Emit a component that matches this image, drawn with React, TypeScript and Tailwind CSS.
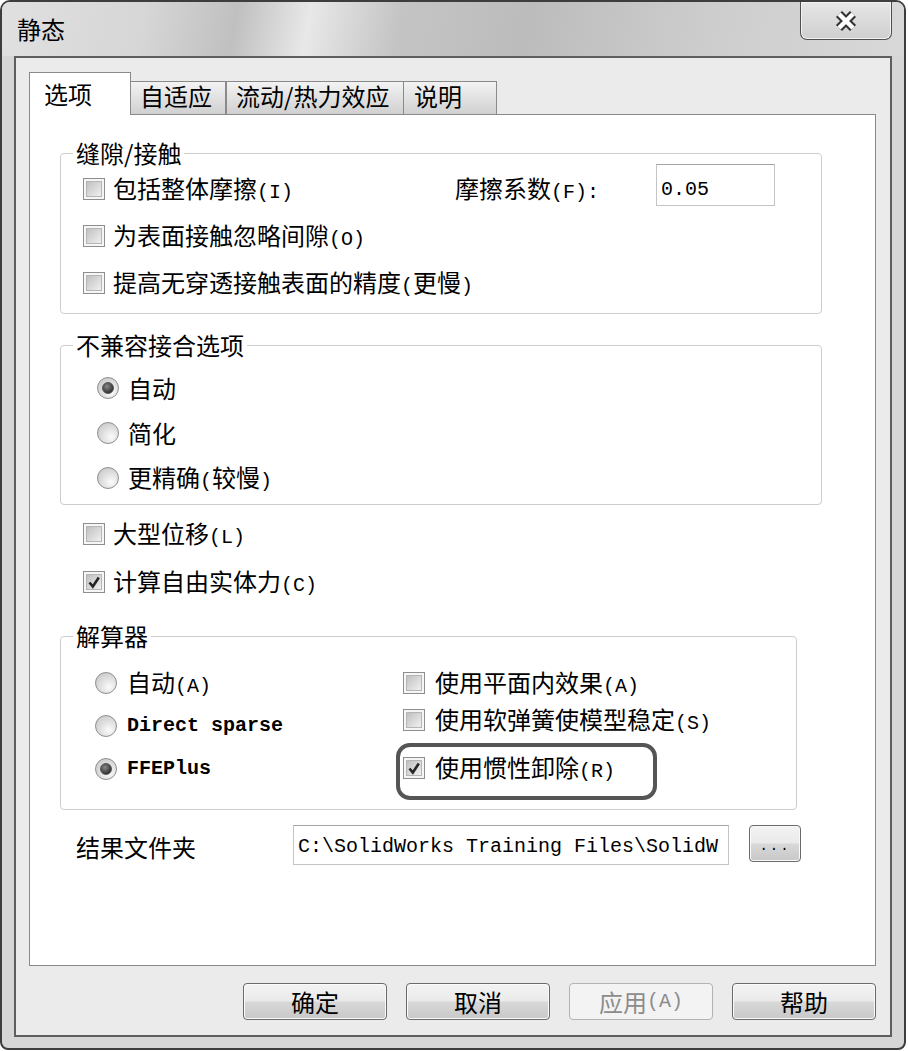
import React from "react";

const zh = "font-['Noto_Sans_CJK_SC','Noto_Sans',sans-serif]";
const mono = "font-['Liberation_Mono',monospace] text-[20px]";

const Checkbox = ({ checked = false }: { checked?: boolean }) => (
  <span className="flex h-[22px] w-[22px] shrink-0 border border-[#8e8e8e] bg-[#f6f6f6] p-[2px]">
    <span className="flex flex-1 items-center justify-center border border-[#b5b5b5] bg-[linear-gradient(135deg,#c0c0c0,#f0f0f0)]">
      {checked && (
        <svg width="14" height="14" viewBox="0 0 14 14">
          <path d="M2.5 7.5 L5.8 11.5 L11.8 2.5" fill="none" stroke="#262626" strokeWidth="2.6" />
        </svg>
      )}
    </span>
  </span>
);

const Radio = ({ checked = false }: { checked?: boolean }) => (
  <span className="flex h-[22px] w-[22px] shrink-0 items-center justify-center rounded-full border border-[#8e8e8e] bg-[radial-gradient(circle_at_65%_70%,#fbfbfb,#c0c0c0)]">
    {checked && (
      <span className="h-[12px] w-[12px] rounded-full border border-[#555] bg-[radial-gradient(circle_at_40%_35%,#8a8a8a,#111)]" />
    )}
  </span>
);

const Row = ({ children, gap = "gap-[8px]" }: { children: React.ReactNode; gap?: string }) => (
  <div className={`flex h-[28px] items-center ${gap} text-[24px] leading-none`}>{children}</div>
);

const Group = ({ title, className, children }: { title: string; className: string; children: React.ReactNode }) => (
  <fieldset className={`m-0 rounded-[4px] border border-[#cdcdcd] p-0 shadow-[0_1px_0_#fff] ${className}`}>
    <legend className="ml-[12px] px-[3px] text-[24px] leading-[28px]">{title}</legend>
    {children}
  </fieldset>
);

const Button = ({ children, disabled = false }: { children: React.ReactNode; disabled?: boolean }) => (
  <div
    className={
      disabled
        ? "flex h-[37px] w-[144px] items-center justify-center rounded-[4px] border border-[#b3b3b3] bg-[#f3f3f3] text-[24px] text-[#8c8c8c]"
        : "flex h-[37px] w-[144px] items-center justify-center rounded-[4px] border border-[#6a6a6a] bg-[linear-gradient(180deg,#f3f3f3_0%,#eaeaea_48%,#d8d8d8_52%,#c8c8c8_100%)] text-[24px] shadow-[inset_0_0_0_1px_#fafafa]"
    }
  >
    {children}
  </div>
);

export default function App() {
  return (
    <div className={`h-[1051px] w-[908px] bg-white text-black ${zh}`}>
      <div className="flex h-[1050px] w-[906px] flex-col overflow-hidden rounded-t-[10px] rounded-b-[8px] border-2 border-[#3d3d3d] bg-[#d6d6d6]">
        {/* TITLE */}
        <div className="flex h-[54px] justify-between bg-[linear-gradient(100deg,#e0e0e0_0%,#d6d6d6_16%,#c0c0c0_26%,#e8e8e8_34%,#c4c4c4_44%,#bcbcbc_58%,#cdcdcd_78%,#d8d8d8_100%)] pl-[15px] pr-[12px]">
          <span className="self-center text-[24px] leading-none">静态</span>
          <div className="flex h-[38px] w-[92px] items-center justify-center rounded-b-[7px] border border-t-0 border-[#4f4f4f] bg-[linear-gradient(180deg,#e6e6e6,#cfcfcf)] shadow-[inset_0_0_0_1px_#f2f2f2]">
            <svg width="26" height="22" viewBox="0 0 26 22">
              <path d="M6 4 L20 18 M20 4 L6 18" stroke="#333" strokeWidth="8.5" />
              <path d="M6 4 L20 18 M20 4 L6 18" stroke="#fff" strokeWidth="4.5" />
            </svg>
          </div>
        </div>

        {/* CLIENT */}
        <div className="mx-[12px] mb-[11px] flex flex-1 flex-col border-2 border-[#5e5e5e] bg-[#ebebeb] pl-[13px] pr-[14px] pt-[14px]">
          {/* TABS */}
          <div className="flex h-[42px] items-end">
            <div className="relative z-10 -mb-px flex h-[43px] w-[102px] items-center border border-b-0 border-[#8a8a8a] bg-white pl-[14px] text-[24px] leading-none">
              选项
            </div>
            <div className="flex h-[33px] w-[95px] items-center border border-b-0 border-l-0 border-[#8a8a8a] bg-[linear-gradient(180deg,#f3f3f3,#d0d0d0)] pb-[4px] pl-[9px] text-[24px] leading-none">
              自适应
            </div>
            <div className="flex h-[33px] w-[178px] items-center border border-b-0 border-[#8a8a8a] bg-[linear-gradient(180deg,#f3f3f3,#d0d0d0)] pb-[4px] pl-[9px] text-[24px] leading-none">
              流动/热力效应
            </div>
            <div className="flex h-[33px] w-[93px] items-center border border-b-0 border-l-0 border-[#8a8a8a] bg-[linear-gradient(180deg,#f3f3f3,#d0d0d0)] pb-[4px] pl-[10px] text-[24px] leading-none">
              说明
            </div>
          </div>

          {/* PANE */}
          <div className="flex flex-1 flex-col border border-[#8a8a8a] bg-white">
            <Group title="缝隙/接触" className="ml-[30px] mt-[24px] w-[762px]">
              <div className="flex flex-col gap-[19px] pb-[16px] pl-[22px] pt-[8px]">
                <div className="flex h-[28px] items-center text-[24px] leading-none">
                  <div className="flex w-[372px] items-center gap-[8px]">
                    <Checkbox />
                    <span>
                      包括整体摩擦<span className={mono}>(I)</span>
                    </span>
                  </div>
                  <span className="w-[201px]">
                    摩擦系数<span className={mono}>(F):</span>
                  </span>
                  <div className="-mt-[8px] h-[42px] w-[119px] shrink-0 border border-[#c4c4c4] border-t-[#a4a4a4] bg-white pl-[4px] pt-[8px]">
                    <span className={`${mono} leading-none`}>0.05</span>
                  </div>
                </div>
                <Row>
                  <Checkbox />
                  <span>
                    为表面接触忽略间隙<span className={mono}>(O)</span>
                  </span>
                </Row>
                <Row>
                  <Checkbox />
                  <span>
                    提高无穿透接触表面的精度<span className={mono}>(</span>更慢<span className={mono}>)</span>
                  </span>
                </Row>
              </div>
            </Group>

            <Group title="不兼容接合选项" className="ml-[30px] mt-[17px] w-[762px]">
              <div className="flex flex-col gap-[17px] pb-[12px] pl-[36px] pt-[15px]">
                <Row gap="gap-[9px]">
                  <Radio checked />
                  <span>自动</span>
                </Row>
                <Row gap="gap-[9px]">
                  <Radio />
                  <span>简化</span>
                </Row>
                <Row gap="gap-[9px]">
                  <Radio />
                  <span>
                    更精确<span className={mono}>(</span>较慢<span className={mono}>)</span>
                  </span>
                </Row>
              </div>
            </Group>

            <div className="ml-[53px] mt-[15px] flex flex-col gap-[20px]">
              <Row>
                <Checkbox />
                <span>
                  大型位移<span className={mono}>(L)</span>
                </span>
              </Row>
              <Row>
                <Checkbox checked />
                <span>
                  计算自由实体力<span className={mono}>(C)</span>
                </span>
              </Row>
            </div>

            <Group title="解算器" className="ml-[30px] mt-[26px] w-[737px]">
              <div className="flex pb-[26px] pl-[34px] pt-[19px]">
                <div className="flex w-[308px] flex-col gap-[15px]">
                  <Row gap="gap-[10px]">
                    <Radio />
                    <span>
                      自动<span className={mono}>(A)</span>
                    </span>
                  </Row>
                  <Row gap="gap-[10px]">
                    <Radio />
                    <span className={`${mono} font-bold`}>Direct sparse</span>
                  </Row>
                  <Row gap="gap-[10px]">
                    <Radio checked />
                    <span className={`${mono} font-bold`}>FFEPlus</span>
                  </Row>
                </div>
                <div className="flex flex-col">
                  <Row gap="gap-[10px]">
                    <Checkbox />
                    <span>
                      使用平面内效果<span className={mono}>(A)</span>
                    </span>
                  </Row>
                  <div className="mt-[9px]">
                    <Row gap="gap-[10px]">
                      <Checkbox />
                      <span>
                        使用软弹簧使模型稳定<span className={mono}>(S)</span>
                      </span>
                    </Row>
                  </div>
                  <div className="relative mt-[20px]">
                    <Row gap="gap-[10px]">
                      <Checkbox checked />
                      <span>
                        使用惯性卸除<span className={mono}>(R)</span>
                      </span>
                    </Row>
                    <span className="absolute -left-[7px] -top-[11px] h-[57px] w-[261px] rounded-[14px] border-4 border-[#555]" />
                  </div>
                </div>
              </div>
            </Group>

            <div className="mt-[15px] flex items-start">
              <span className="w-[263px] pl-[46px] pt-[8px] text-[24px] leading-[28px]">结果文件夹</span>
              <div className="h-[40px] w-[436px] whitespace-nowrap border border-[#c4c4c4] border-t-[#a4a4a4] bg-white pl-[4px] pt-[7px]">
                <span className={`${mono} leading-none`}>{"C:\\SolidWorks Training Files\\SolidW"}</span>
              </div>
              <div className="ml-[20px] flex h-[37px] w-[52px] items-end justify-center rounded-[4px] border border-[#6a6a6a] bg-[linear-gradient(180deg,#f3f3f3_0%,#eaeaea_48%,#d8d8d8_52%,#c8c8c8_100%)] pb-[8px] shadow-[inset_0_0_0_1px_#fafafa]">
                <span className="font-['Liberation_Mono',monospace] text-[14px] leading-none tracking-[2px]">...</span>
              </div>
            </div>
          </div>

          {/* FOOTER */}
          <div className="flex justify-end gap-[19px] pb-[15px] pt-[17px]">
            <Button>确定</Button>
            <Button>取消</Button>
            <Button disabled>
              应用<span className={mono}>(A)</span>
            </Button>
            <Button>帮助</Button>
          </div>
        </div>
      </div>
    </div>
  );
}
